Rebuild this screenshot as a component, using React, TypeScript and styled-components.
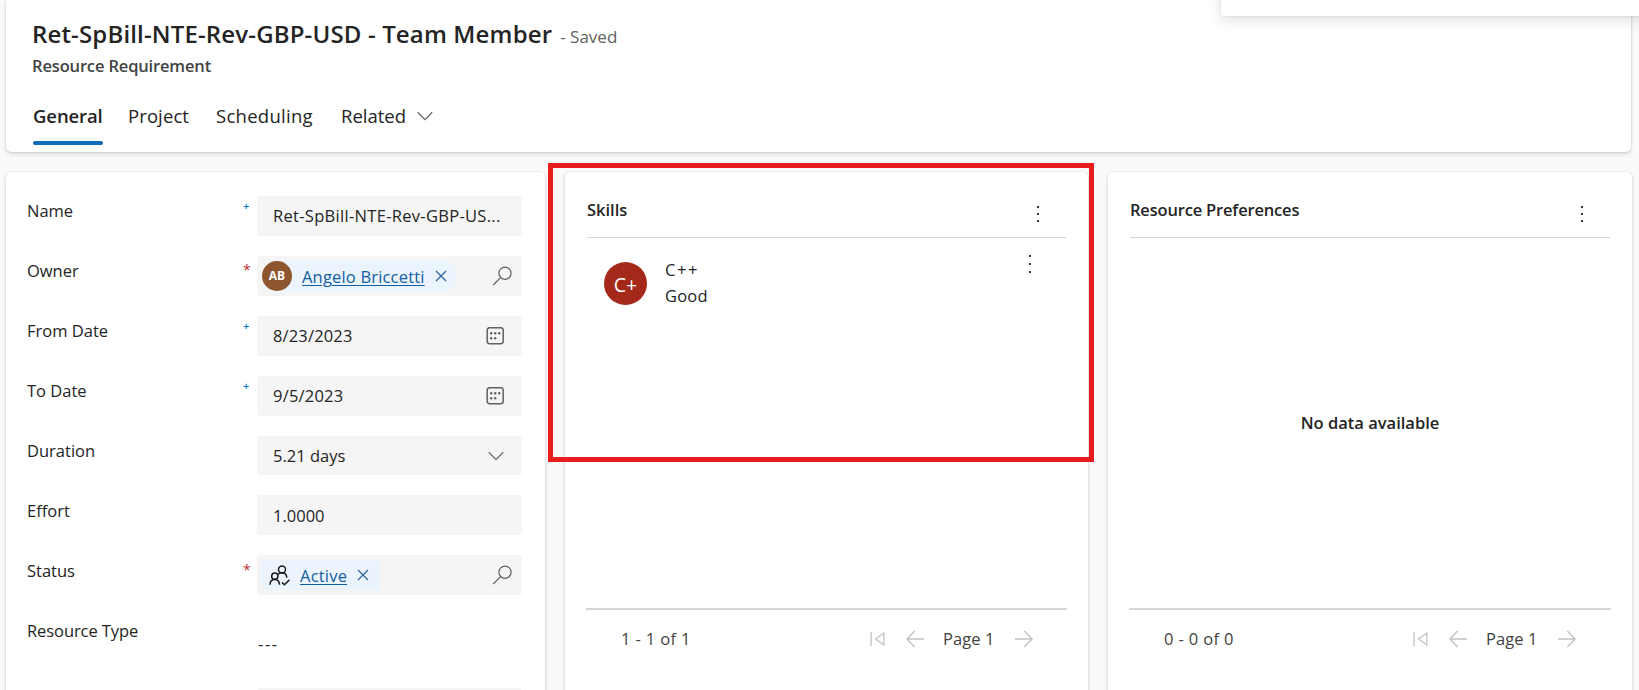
import React from "react";
import styled, { createGlobalStyle, css } from "styled-components";

const GlobalStyle = createGlobalStyle`
  *, *::before, *::after { box-sizing: border-box; }
  html, body { margin: 0; overflow: hidden; }
  body {
    background: #fafafa;
    color: #242424;
    font-family: "Open Sans", "Noto Sans", sans-serif;
    font-size: 16.5px;
    line-height: 20px;
  }
`;

const surface = css`
  background: #fff;
  box-shadow: 0 0 2px rgba(0, 0, 0, 0.14), 0 2px 4px rgba(0, 0, 0, 0.14);
`;

const Page = styled.div`
  position: relative;
  height: 690px;
  overflow: hidden;
  padding: 0 7px 0 6px;
`;

const Text = styled.span<{ $track?: number }>`
  white-space: nowrap;
  letter-spacing: ${(p) => p.$track ?? 0}px;
`;

const RecordHeader = styled.header`
  ${surface}
  width: 1625px;
  height: 152px;
  border-radius: 0 0 5px 5px;
  padding: 18px 26px 0;
`;

const TitleRow = styled.div`
  display: flex;
  align-items: baseline;
  gap: 8px;
  height: 32px;
  line-height: 32px;
`;

const Title = styled(Text).attrs({ as: "h1" })`
  margin: 0;
  font-size: 24px;
  font-weight: 600;
`;

const SaveState = styled(Text)`
  font-size: 17px;
  color: #616161;
`;

const Subtitle = styled(Text)`
  display: block;
  margin-top: 6px;
  font-weight: 600;
  color: #424242;
`;

const Tabs = styled.nav`
  display: flex;
  margin: 27px 0 0 1px;
`;

const Tab = styled.div<{ $active?: boolean; $width: number }>`
  display: flex;
  align-items: center;
  gap: 11px;
  width: ${(p) => p.$width}px;
  height: 42px;
  margin-right: 27px;
  padding-bottom: 12px;
  border-bottom: 4px solid transparent;
  font-size: 18.5px;
  line-height: 26px;
  font-weight: ${(p) => (p.$active ? 600 : 400)};
  position: relative;

  ${(p) =>
    p.$active &&
    css`
      margin-right: 25px;

      &::after {
        content: "";
        position: absolute;
        left: 0;
        right: 0;
        bottom: -4px;
        height: 4px;
        border-radius: 2px;
        background: #0f6cbd;
      }
    `}
`;

const Columns = styled.main`
  display: grid;
  grid-template-columns: 539px 523px 524px;
  gap: 20px;
  margin-top: 20px;
`;

const Card = styled.section`
  ${surface}
  height: 540px;
  border-radius: 5px 5px 0 0;
`;

const FormCard = styled(Card)`
  padding: 24px 23px 0 21px;
  overflow: hidden;
`;

const Row = styled.div`
  display: grid;
  grid-template-columns: 216px 14px 265px;
  height: 60px;
`;

const Label = styled(Text)`
  padding-top: 5px;
`;

const Mark = styled.span<{ $kind: "required" | "recommended" }>`
  ${(p) =>
    p.$kind === "required"
      ? css`
          color: #bc2f32;
          font-size: 14px;
          padding-top: 4px;
        `
      : css`
          color: #0078d4;
          font-size: 11px;
          font-weight: 600;
        `}
`;

const Field = styled.div<{ $height?: number; $shift?: number }>`
  display: flex;
  align-items: center;
  height: ${(p) => p.$height ?? 40}px;
  margin-top: ${(p) => p.$shift ?? 0}px;
  padding: ${(p) => (p.$height || p.$shift ? 1 : 0)}px 18px 0 16px;
  border-radius: 4px;
  background: #f5f5f5;

  > svg {
    margin-left: auto;
  }
`;

const LookupField = styled(Field)`
  padding: 0 10px 0 5px;
`;

const EmptyValue = styled.div`
  padding: 18px 0 0 1px;
  letter-spacing: 1.6px;
`;

const Chip = styled.div<{ $round?: boolean }>`
  display: flex;
  align-items: center;
  height: 30px;
  padding: ${(p) => (p.$round ? "0 10px 0 0" : "0 11px 0 7px")};
  border-radius: ${(p) => (p.$round ? "15px" : "4px")};
  background: #ebf3fc;
`;

const Link = styled(Text).attrs({ as: "a" })`
  margin: 1px 10px 0;
  color: #115ea3;
  text-decoration: underline;
  text-decoration-thickness: 1px;
  text-underline-offset: 2px;
`;

const OwnerAvatar = styled.div`
  display: flex;
  align-items: center;
  justify-content: center;
  width: 30px;
  height: 30px;
  border-radius: 50%;
  background: #8e562e;
  color: #fff;
  font-size: 12px;
  font-weight: 700;
`;

const PanelHeader = styled.div`
  display: flex;
  justify-content: space-between;
  height: 66px;
  margin: 0 22px;
  padding: 28px 26px 0 0;
  border-bottom: 1px solid #d6d6d6;

  svg {
    margin-top: 4px;
  }
`;

const PanelTitle = styled(Text).attrs({ as: "h2" })`
  margin: 0;
  font-size: 16.5px;
  font-weight: 600;
`;

const PanelBody = styled.div<{ $empty?: boolean }>`
  display: flex;
  height: 370px;
  justify-content: ${(p) => (p.$empty ? "center" : "flex-start")};
  align-items: ${(p) => (p.$empty ? "center" : "flex-start")};
  font-weight: ${(p) => (p.$empty ? 600 : 400)};
`;

const SkillItem = styled.div`
  display: flex;
  flex: 1;
  padding: 16px 56px 0 39px;

  > svg {
    margin-left: auto;
  }
`;

const SkillAvatar = styled.div`
  display: flex;
  align-items: center;
  justify-content: center;
  width: 43px;
  height: 43px;
  margin: 8px 18px 0 0;
  padding-top: 2px;
  border-radius: 50%;
  background: #a4291a;
  color: #fff;
  font-size: 19.5px;
`;

const SkillText = styled.div`
  display: flex;
  flex-direction: column;
  padding-top: 3px;
  line-height: 26px;
`;

const Pager = styled.footer`
  display: flex;
  align-items: center;
  height: 59px;
  margin: 0 21px;
  padding: 0 34px 0 35px;
  border-top: 2px solid #d6d6d6;
  color: #424242;
`;

const PagerNav = styled.div<{ $end: number }>`
  display: flex;
  align-items: center;
  margin-left: auto;
  margin-right: ${(p) => p.$end}px;

  svg {
    flex: none;
  }
  svg + svg {
    margin-left: 21px;
  }
  span {
    width: 50px;
    margin: 0 22px 0 19px;
  }
`;

const Popup = styled.div`
  position: absolute;
  top: -20px;
  right: -10px;
  width: 428px;
  height: 36px;
  border-radius: 3px;
  background: #fff;
  box-shadow: 0 0 2px rgba(0, 0, 0, 0.12), 0 4px 14px rgba(0, 0, 0, 0.13);
`;

const Highlight = styled.div`
  position: absolute;
  left: 548px;
  top: 163px;
  width: 546px;
  height: 299px;
  border: 5px solid #e81c1c;
`;

const Chevron = () => (
  <svg width="16" height="10" viewBox="0 0 16 10" fill="none" stroke="#616161" strokeWidth="1.2">
    <path d="M.8 1.2 8 8.6l7.2-7.4" />
  </svg>
);

const CloseIcon = () => (
  <svg width="12" height="12" viewBox="0 0 12 12" fill="none" stroke="#2b62a0" strokeWidth="1.2">
    <path d="M1 1l10 10M11 1 1 11" />
  </svg>
);

const SearchIcon = () => (
  <svg width="20" height="20" viewBox="0 0 20 20" fill="none" stroke="#616161" strokeWidth="1.2">
    <circle cx="13" cy="7.2" r="6.1" />
    <path d="M8.6 11.6 1.2 19" />
  </svg>
);

const CalendarIcon = () => (
  <svg width="18" height="18" viewBox="0 0 18 18" fill="none">
    <rect x="1.2" y=".7" width="16" height="16" rx="2.4" stroke="#616161" strokeWidth="1.5" />
    <g fill="#616161">
      <circle cx="5.2" cy="6.2" r="1.2" />
      <circle cx="9.2" cy="6.2" r="1.2" />
      <circle cx="13.2" cy="6.2" r="1.2" />
      <circle cx="5.2" cy="11.2" r="1.2" />
      <circle cx="9.2" cy="11.2" r="1.2" />
    </g>
  </svg>
);

const PeopleIcon = () => (
  <svg width="21" height="21" viewBox="0 0 21 21" fill="none" stroke="#1b1b1b" strokeWidth="1.5">
    <circle cx="13" cy="4.4" r="3.5" />
    <circle cx="5.8" cy="11.2" r="3.1" />
    <path d="M1 19.8c0-3.4 2-5.4 4.8-5.4s4.600 2 4.800 5.400M8.900 9.600c.9-1.300 2.300-1.800 4.100-1.800 2.600 0 4.500 1.900 4.900 4.800M13 17.400l2.400 2.400 5-4.900" />
  </svg>
);

const MoreIcon = ({ gap = 7 }: { gap?: number }) => (
  <svg width="4" height="20" viewBox="0 0 4 20" fill="#333">
    {[-gap, 0, gap].map((d) => (
      <rect key={d} x="1" y={9 + d} width="2" height="2" />
    ))}
  </svg>
);

const FirstPageIcon = () => (
  <svg width="15" height="16" viewBox="0 0 15 16" fill="none" stroke="#c2c2c2" strokeWidth="1.3">
    <path d="M1.100 1v14M13.800 2v12L5.600 8z" />
  </svg>
);

const ArrowIcon = ({ next }: { next?: boolean }) => (
  <svg width="18" height="18" viewBox="0 0 18 18" fill="none" stroke="#c2c2c2" strokeWidth="1.4">
    <path d={next ? "M0 9h17M9.300 1l7.800 8-7.800 8" : "M18 9H1M8.700 1 .9 9l7.800 8"} />
  </svg>
);

type RowProps = {
  label: string;
  track?: number;
  mark?: "required" | "recommended";
  children: React.ReactNode;
};

const FormRow = ({ label, track, mark, children }: RowProps) => (
  <Row>
    <Label $track={track}>{label}</Label>
    {mark ? <Mark $kind={mark}>{mark === "required" ? "*" : "+"}</Mark> : <span />}
    {children}
  </Row>
);

const PanelPager = ({ range, end }: { range: string; end: number }) => (
  <Pager>
    <Text $track={0.35}>{range}</Text>
    <PagerNav $end={end}>
      <FirstPageIcon />
      <ArrowIcon />
      <Text $track={0.1}>Page 1</Text>
      <ArrowIcon next />
    </PagerNav>
  </Pager>
);

export default function App() {
  return (
    <Page>
      <GlobalStyle />
      <RecordHeader>
        <TitleRow>
          <Title $track={0.15}>Ret-SpBill-NTE-Rev-GBP-USD - Team Member</Title>
          <SaveState>- Saved</SaveState>
        </TitleRow>
        <Subtitle $track={-0.15}>Resource Requirement</Subtitle>
        <Tabs>
          <Tab $active $width={70}>
            <Text $track={-0.1}>General</Text>
          </Tab>
          <Tab $width={61}>
            <Text $track={0.1}>Project</Text>
          </Tab>
          <Tab $width={98}>
            <Text $track={0.28}>Scheduling</Text>
          </Tab>
          <Tab $width={92}>
            <Text>Related</Text>
            <Chevron />
          </Tab>
        </Tabs>
      </RecordHeader>

      <Columns>
        <FormCard>
          <FormRow label="Name" mark="recommended">
            <Field>
              <Text $track={0.3}>Ret-SpBill-NTE-Rev-GBP-US...</Text>
            </Field>
          </FormRow>
          <FormRow label="Owner" mark="required">
            <LookupField>
              <Chip $round>
                <OwnerAvatar>AB</OwnerAvatar>
                <Link $track={0.18}>Angelo Briccetti</Link>
                <CloseIcon />
              </Chip>
              <SearchIcon />
            </LookupField>
          </FormRow>
          <FormRow label="From Date" mark="recommended">
            <Field>
              <Text $track={0.15}>8/23/2023</Text>
              <CalendarIcon />
            </Field>
          </FormRow>
          <FormRow label="To Date" mark="recommended">
            <Field>
              <Text $track={0.2}>9/5/2023</Text>
              <CalendarIcon />
            </Field>
          </FormRow>
          <FormRow label="Duration">
            <Field $height={39}>
              <Text>5.21 days</Text>
              <Chevron />
            </Field>
          </FormRow>
          <FormRow label="Effort">
            <Field $shift={-1}>
              <Text>1.0000</Text>
            </Field>
          </FormRow>
          <FormRow label="Status" mark="required">
            <LookupField $shift={-1}>
              <Chip>
                <PeopleIcon />
                <Link $track={0.2}>Active</Link>
                <CloseIcon />
              </Chip>
              <SearchIcon />
            </LookupField>
          </FormRow>
          <FormRow label="Resource Type" track={-0.08}>
            <EmptyValue>---</EmptyValue>
          </FormRow>
          <FormRow label="">
            <Field $shift={12} />
          </FormRow>
        </FormCard>

        <Card>
          <PanelHeader>
            <PanelTitle>Skills</PanelTitle>
            <MoreIcon />
          </PanelHeader>
          <PanelBody>
            <SkillItem>
              <SkillAvatar>C+</SkillAvatar>
              <SkillText>
                <Text $track={1.6}>C++</Text>
                <Text $track={0.2}>Good</Text>
              </SkillText>
              <MoreIcon gap={8} />
            </SkillItem>
          </PanelBody>
          <PanelPager range="1 - 1 of 1" end={0} />
        </Card>

        <Card>
          <PanelHeader>
            <PanelTitle $track={-0.18}>Resource Preferences</PanelTitle>
            <MoreIcon />
          </PanelHeader>
          <PanelBody $empty>
            <Text>No data available</Text>
          </PanelBody>
          <PanelPager range="0 - 0 of 0" end={1} />
        </Card>
      </Columns>

      <Popup />
      <Highlight />
    </Page>
  );
}
